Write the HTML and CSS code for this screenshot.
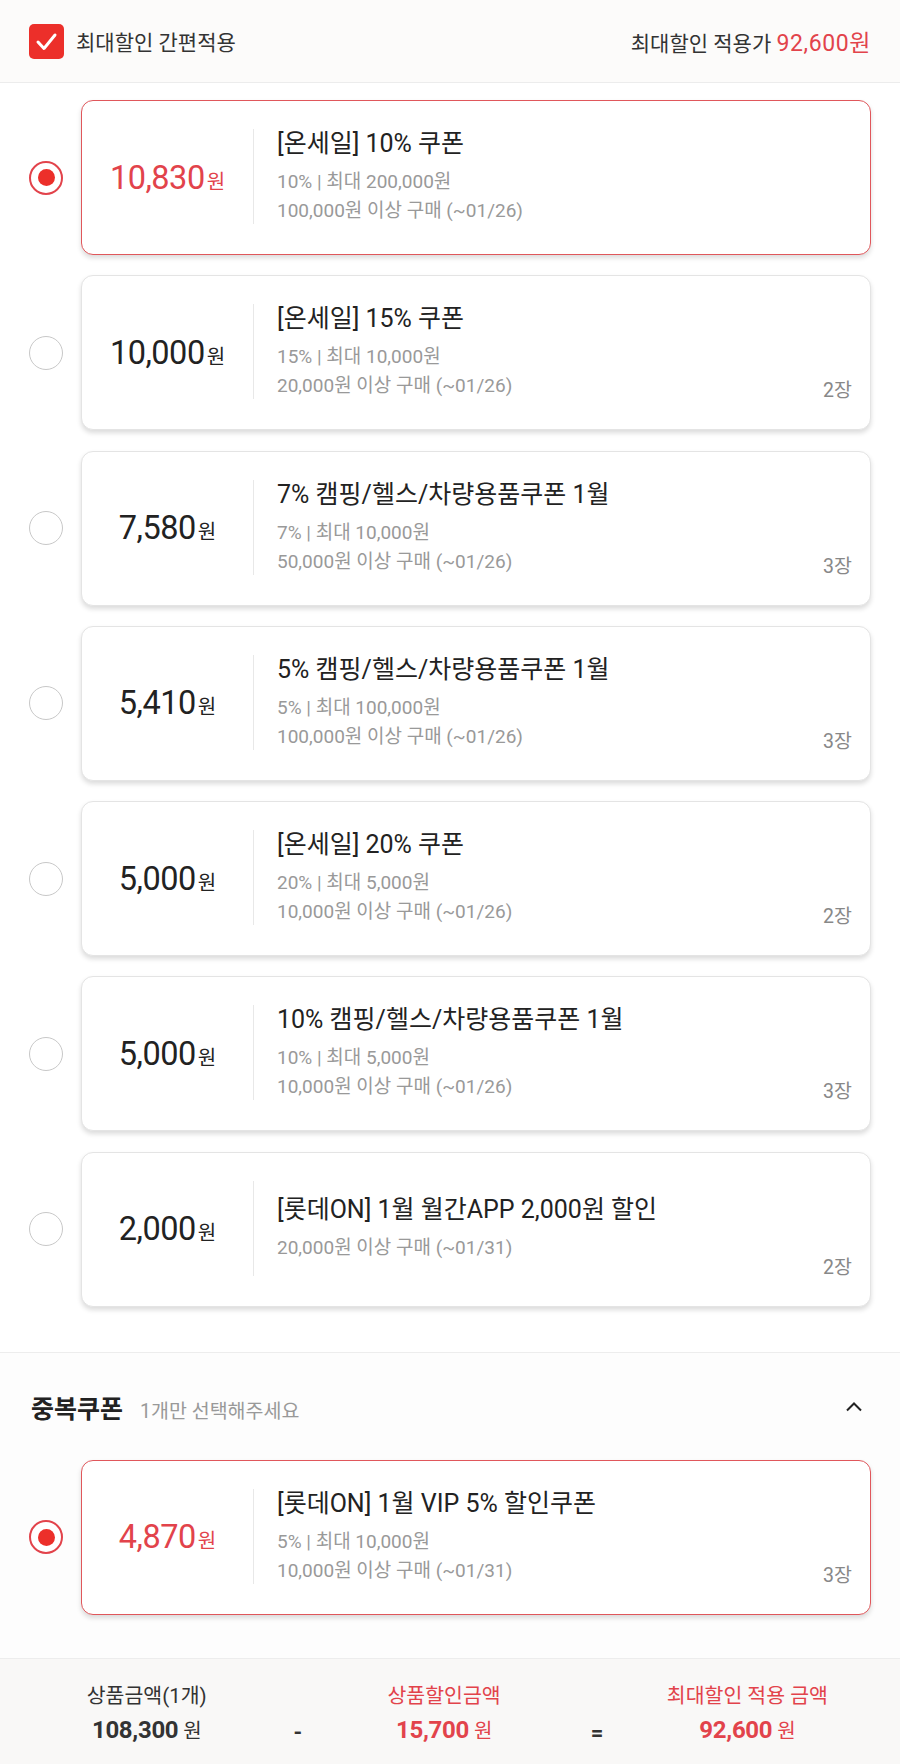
FILE: index.html
```html
<!DOCTYPE html>
<html lang="ko">
<head>
<meta charset="utf-8">
<title>쿠폰 선택</title>
<link rel="stylesheet" href="styles.css">
</head>
<body>
<div class="page">
  <header class="topbar">
    <div class="easy">
      <svg class="check" width="35" height="35" viewBox="0 0 35 35"><rect x="0" y="0" width="35" height="35" rx="5" fill="#ec2f2a"/><path d="M9 18 L15 24.5 L26 11" fill="none" stroke="#fff" stroke-width="3" stroke-linecap="round" stroke-linejoin="round"/></svg>
      <span>최대할인 간편적용</span>
    </div>
    <div class="best">최대할인 적용가 <em>92,600원</em></div>
  </header>

  <section class="list">
    <div class="row">
      <span class="radio on"></span>
      <div class="card sel">
        <div class="amt red">10,830<small>원</small></div>
        <div class="info">
          <div class="title">[온세일] 10% 쿠폰</div>
          <div class="det">10% | 최대 200,000원</div>
          <div class="det">100,000원 이상 구매 (~01/26)</div>
        </div>
      </div>
    </div>
    <div class="row">
      <span class="radio"></span>
      <div class="card">
        <div class="amt">10,000<small>원</small></div>
        <div class="info">
          <div class="title">[온세일] 15% 쿠폰</div>
          <div class="det">15% | 최대 10,000원</div>
          <div class="det">20,000원 이상 구매 (~01/26)</div>
        </div>
        <span class="cnt">2장</span>
      </div>
    </div>
    <div class="row">
      <span class="radio"></span>
      <div class="card">
        <div class="amt">7,580<small>원</small></div>
        <div class="info">
          <div class="title">7% 캠핑/헬스/차량용품쿠폰 1월</div>
          <div class="det">7% | 최대 10,000원</div>
          <div class="det">50,000원 이상 구매 (~01/26)</div>
        </div>
        <span class="cnt">3장</span>
      </div>
    </div>
    <div class="row">
      <span class="radio"></span>
      <div class="card">
        <div class="amt">5,410<small>원</small></div>
        <div class="info">
          <div class="title">5% 캠핑/헬스/차량용품쿠폰 1월</div>
          <div class="det">5% | 최대 100,000원</div>
          <div class="det">100,000원 이상 구매 (~01/26)</div>
        </div>
        <span class="cnt">3장</span>
      </div>
    </div>
    <div class="row">
      <span class="radio"></span>
      <div class="card">
        <div class="amt">5,000<small>원</small></div>
        <div class="info">
          <div class="title">[온세일] 20% 쿠폰</div>
          <div class="det">20% | 최대 5,000원</div>
          <div class="det">10,000원 이상 구매 (~01/26)</div>
        </div>
        <span class="cnt">2장</span>
      </div>
    </div>
    <div class="row">
      <span class="radio"></span>
      <div class="card">
        <div class="amt">5,000<small>원</small></div>
        <div class="info">
          <div class="title">10% 캠핑/헬스/차량용품쿠폰 1월</div>
          <div class="det">10% | 최대 5,000원</div>
          <div class="det">10,000원 이상 구매 (~01/26)</div>
        </div>
        <span class="cnt">3장</span>
      </div>
    </div>
    <div class="row">
      <span class="radio"></span>
      <div class="card">
        <div class="amt">2,000<small>원</small></div>
        <div class="info">
          <div class="title">[롯데ON] 1월 월간APP 2,000원 할인</div>
          <div class="det">20,000원 이상 구매 (~01/31)</div>
        </div>
        <span class="cnt">2장</span>
      </div>
    </div>
  </section>

  <section class="dup">
    <div class="dup-head">
      <div class="dup-title"><strong>중복쿠폰</strong><span>1개만 선택해주세요</span></div>
      <svg class="chev" width="18" height="11" viewBox="0 0 18 11"><polyline points="2,9.5 9,2.5 16,9.5" fill="none" stroke="#222" stroke-width="2"/></svg>
    </div>
    <div class="row">
      <span class="radio on"></span>
      <div class="card sel">
        <div class="amt red">4,870<small>원</small></div>
        <div class="info">
          <div class="title">[롯데ON] 1월 VIP 5% 할인쿠폰</div>
          <div class="det">5% | 최대 10,000원</div>
          <div class="det">10,000원 이상 구매 (~01/31)</div>
        </div>
        <span class="cnt">3장</span>
      </div>
    </div>
  </section>

  <footer class="summary">
    <div class="col">
      <div class="lbl">상품금액(1개)</div>
      <div class="val">108,300<small>원</small></div>
    </div>
    <div class="op">-</div>
    <div class="col red">
      <div class="lbl">상품할인금액</div>
      <div class="val">15,700<small>원</small></div>
    </div>
    <div class="op">=</div>
    <div class="col red">
      <div class="lbl">최대할인 적용 금액</div>
      <div class="val">92,600<small>원</small></div>
    </div>
  </footer>
</div>
</body>
</html>
```

FILE: styles.css
```css
* { box-sizing: border-box; }
html, body { margin: 0; padding: 0; }
body {
  font-family: "Roboto", "Noto Sans CJK KR", sans-serif;
  color: #222;
  background: #fff;
  width: 900px;
}
.page { width: 900px; }

.topbar {
  height: 83px;
  display: flex;
  align-items: center;
  justify-content: space-between;
  padding: 0 29px;
  background: #fcfbfa;
  border-bottom: 1px solid #ececec;
}
.easy { display: flex; align-items: center; gap: 12px; font-size: 21px; color: #333; }
.check { display: block; }
.best { font-size: 21px; color: #333; }
.best em { font-style: normal; color: #e2434b; font-size: 23px; letter-spacing: 0.6px; }

.list {
  padding: 17px 29px 45px;
  display: flex;
  flex-direction: column;
  gap: 20.3px;
  border-bottom: 1px solid #ededed;
}
.row { display: flex; align-items: center; gap: 18px; }

.radio {
  flex: none;
  width: 34px;
  height: 34px;
  border-radius: 50%;
  border: 1.5px solid #c8c8c8;
  background: #fff;
  display: flex;
  align-items: center;
  justify-content: center;
}
.radio.on { border: 2px solid #e2434b; }
.radio.on::after {
  content: "";
  width: 17px;
  height: 17px;
  border-radius: 50%;
  background: #ec2f2a;
}

.card {
  position: relative;
  flex: 1;
  height: 155px;
  display: flex;
  align-items: center;
  background: #fff;
  border: 1px solid #e4e4e4;
  border-radius: 12px;
  box-shadow: 0 3px 5px rgba(0,0,0,0.14);
}
.card.sel { border: 1.5px solid #e0575b; }

.amt {
  width: 171px;
  flex: none;
  text-align: center;
  font-size: 32.5px;
  letter-spacing: -0.5px;
  color: #222;
}
.amt small { font-size: 20px; margin-left: 2px; letter-spacing: 0; }
.amt.red { color: #e2434b; }

.info {
  align-self: stretch;
  margin: 28px 0 30px;
  padding-left: 23px;
  border-left: 1px solid #e8e8e8;
  display: flex;
  flex-direction: column;
  justify-content: center;
}
.title { font-size: 25px; line-height: 32px; color: #222; margin-bottom: 7px; }
.det { font-size: 19px; line-height: 29px; color: #999; }

.cnt {
  position: absolute;
  right: 18px;
  bottom: 26px;
  font-size: 19.5px;
  line-height: 24px;
  color: #888;
}

.dup {
  padding: 30px 29px 43px;
  border-bottom: 1px solid #ededed;
  background: #fdfdfd;
}
.dup-head {
  height: 48px;
  display: flex;
  align-items: center;
  justify-content: space-between;
  padding-left: 2px;
  padding-right: 8px;
  margin-bottom: 29px;
}
.dup-title { display: flex; align-items: baseline; gap: 17px; }
.dup-title strong { font-size: 25px; font-weight: 700; color: #222; }
.dup-title span { font-size: 19.5px; color: #999; }
.chev { display: block; }

.summary {
  height: 105px;
  background: #f9f8f7;
  display: flex;
  align-items: center;
  padding-top: 6px;
}
.col { width: 296px; text-align: center; color: #333; }
.col.red { color: #e2434b; }
.col:last-child { width: 308px; }
.lbl { font-size: 20.5px; line-height: 32px; }
.val { font-size: 24px; font-weight: 700; line-height: 36px; letter-spacing: -0.3px; }
.val small { font-size: 20px; font-weight: 400; margin-left: 5px; }
.op { width: 4px; text-align: center; font-size: 22px; font-weight: 700; color: #333; margin-top: 36px; }
```
